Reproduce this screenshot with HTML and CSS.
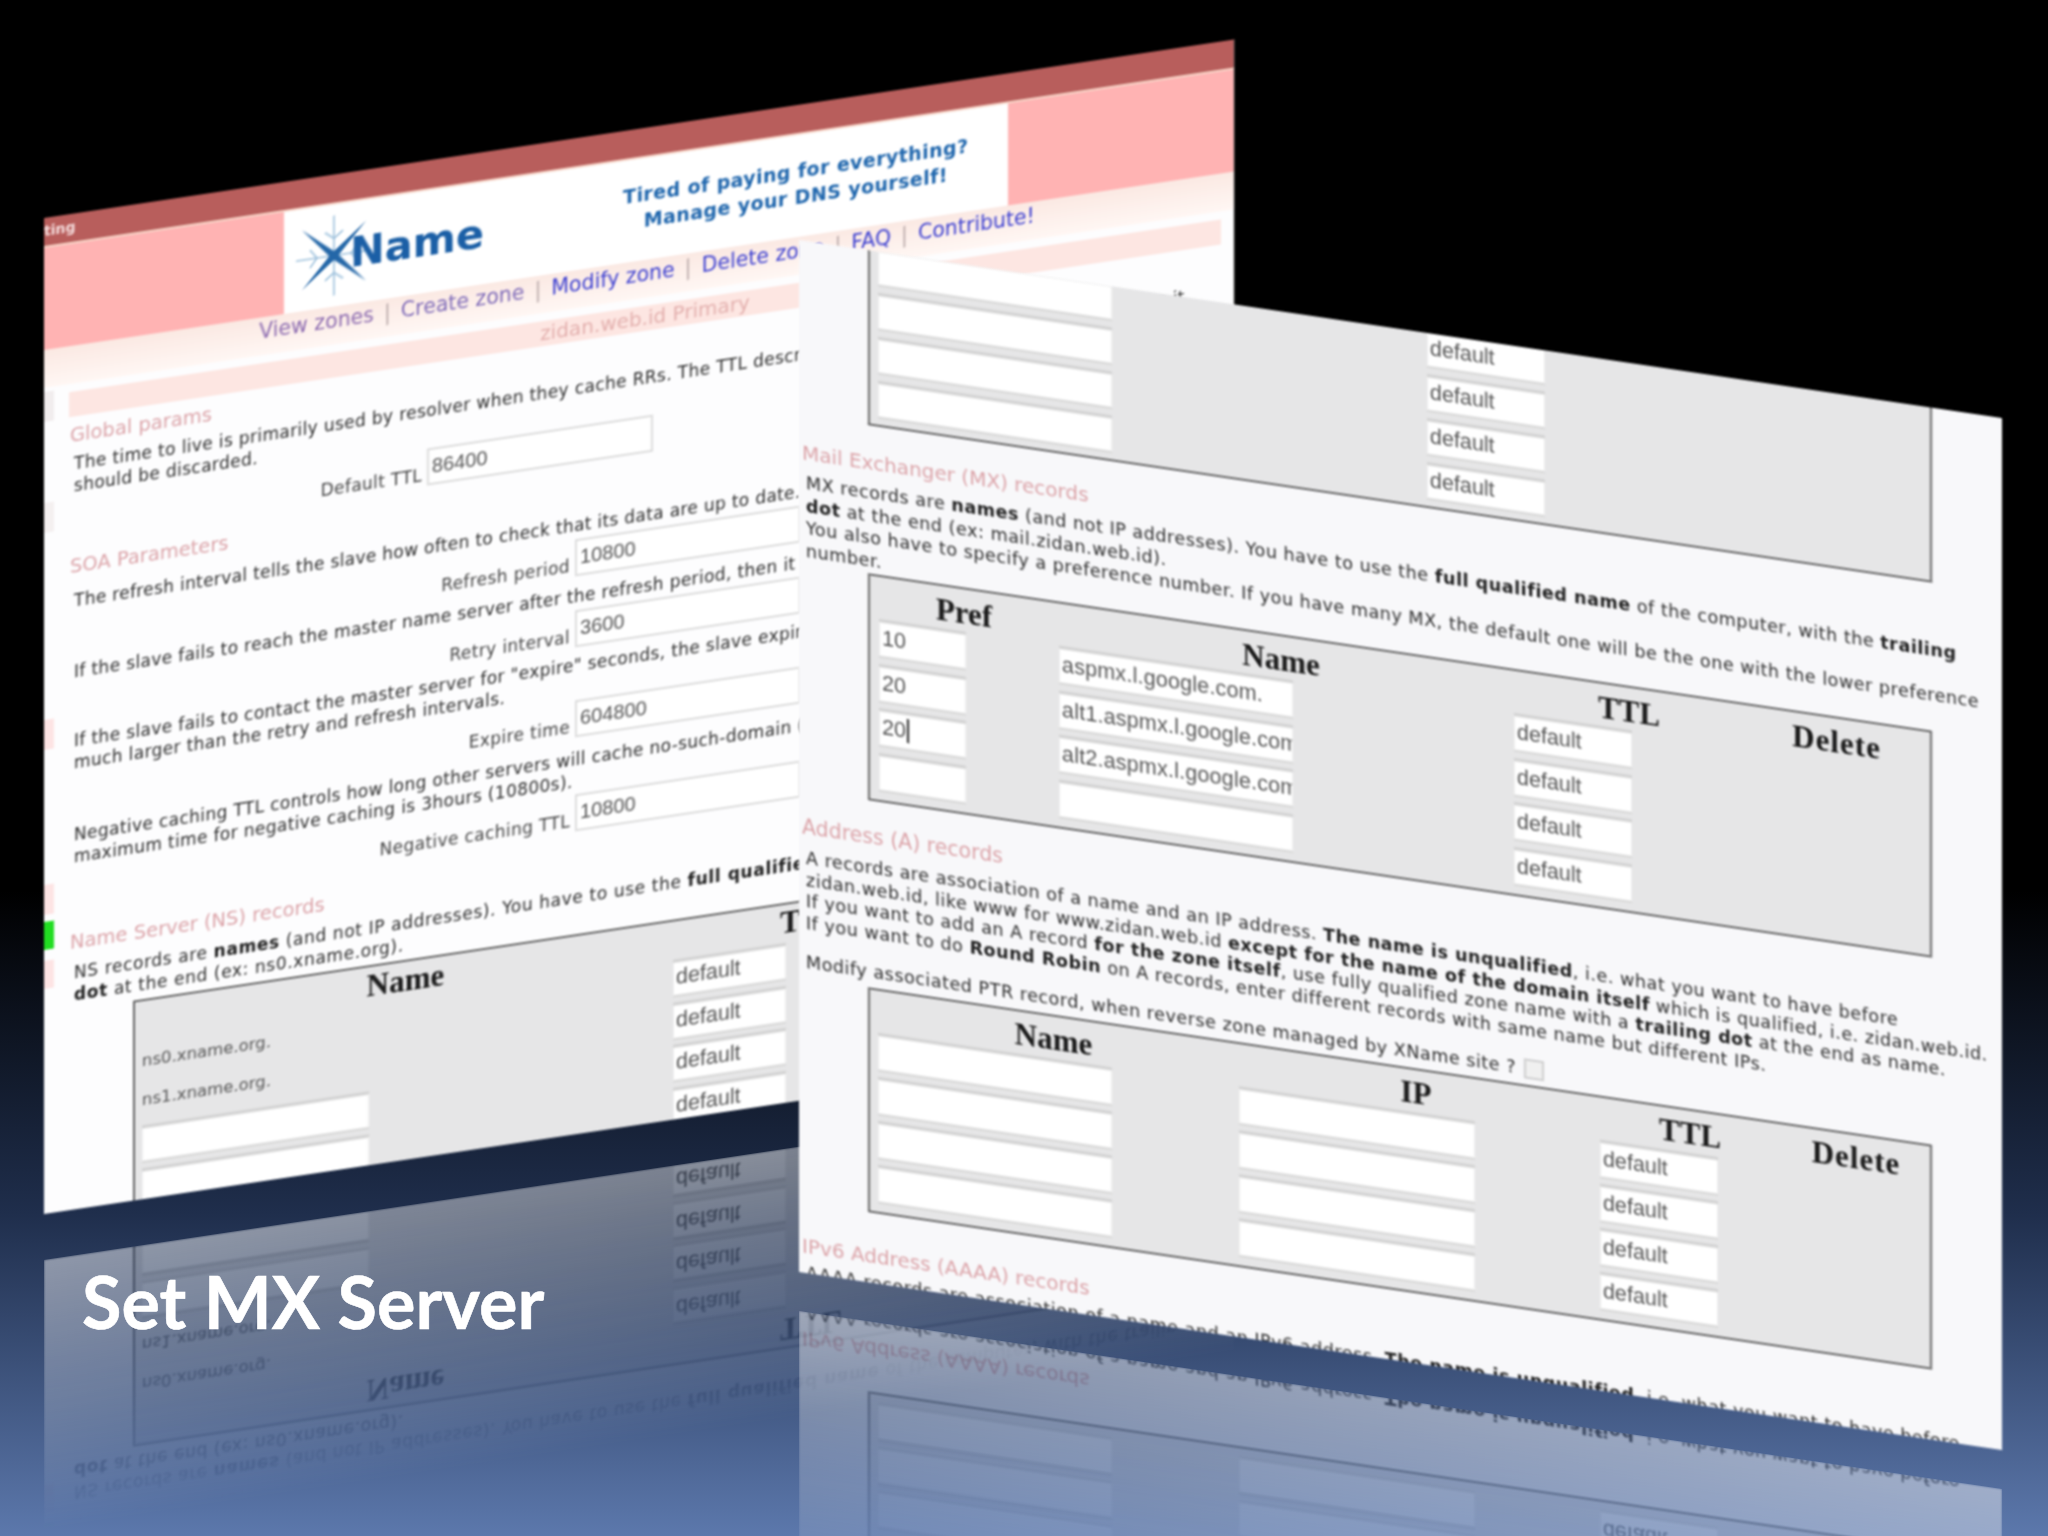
FILE: index.html
```html
<!DOCTYPE html>
<html lang="en">
<head>
<meta charset="utf-8">
<title>Set MX Server</title>
<link rel="stylesheet" href="styles.css">
</head>
<body>
<main class="stage">
  <section class="win win-left">
    <div class="titlebar">ting</div>
    <header class="brand">
      <div class="brand-box">
        <div class="logo">
          <svg class="star" viewBox="-42 -42 84 84" width="84" height="84" aria-hidden="true">
            <g fill="none" stroke="#9cc0dc" stroke-width="1.6">
              <path d="M0 -40V40M-38 0H38"/>
              <path d="M-9 -24L0 -17L9 -24M-9 24L0 17L9 24M-24 -9L-17 0L-24 9M24 -9L17 0L24 9"/>
            </g>
            <g fill="#2467a8">
              <path d="M-32 -30L3 -2L-2 3Z"/>
              <path d="M32 30L-3 2L2 -3Z"/>
              <path d="M32 -30L2 3L-3 -2Z"/>
              <path d="M-32 30L-2 -3L3 2Z"/>
            </g>
          </svg>
          <span class="logo-name">Name</span>
        </div>
        <p class="tagline">Tired of paying for everything?<br>Manage your DNS yourself!</p>
      </div>
    </header>
    <nav class="nav">
      <a class="visited">View zones</a><i>|</i><a class="visited2">Create zone</a><i>|</i><a>Modify zone</a><i>|</i><a>Delete zone</a><i>|</i><a>FAQ</a><i>|</i><a>Contribute!</a>
    </nav>
    <div class="band">zidan.web.id Primary</div>
    <div class="content">
      <h3 class="h-global">Global params</h3>
      <p class="p-a">The time to live is primarily used by resolver when they cache RRs. The TTL describes how long a RR can be cached before it<br>should be discarded.</p>
      <div class="row row-ttl"><label>Default TTL</label><div class="box">86400</div></div>
      <h3 class="h-soa">SOA Parameters</h3>
      <p class="p-b">The refresh interval tells the slave how often to check that its data are up to date.</p>
      <div class="row row-b"><label>Refresh period</label><div class="box">10800</div></div>
      <p class="p-c">If the slave fails to reach the master name server after the refresh period, then it starts trying every retry interval.</p>
      <div class="row row-c"><label>Retry interval</label><div class="box">3600</div></div>
      <p class="p-c2">If the slave fails to contact the master server for "expire" seconds, the slave expires its data. It must be<br>much larger than the retry and refresh intervals.</p>
      <div class="row row-d"><label>Expire time</label><div class="box">604800</div></div>
      <p class="p-e">Negative caching TTL controls how long other servers will cache no-such-domain (NXDOMAIN) responses. The<br>maximum time for negative caching is 3hours (10800s).</p>
      <div class="row row-d"><label>Negative caching TTL</label><div class="box">10800</div></div>
      <h3 class="h-ns">Name Server (NS) records</h3>
      <p class="p-f">NS records are <b>names</b> (and not IP addresses). You have to use the <b>full qualified name</b> of the computer, with the trailing<br><b>dot</b> at the end (ex: ns0.xname.org).</p>
      <div class="table table-ns">
        <div class="col col-ns-name">
          <h4>Name</h4>
          <div class="plain">ns0.xname.org.</div>
          <div class="plain">ns1.xname.org.</div>
          <div class="field wide"></div>
          <div class="field wide"></div>
        </div>
        <div class="col col-ns-ttl">
          <h4>TTL</h4>
          <div class="field ttl">default</div>
          <div class="field ttl">default</div>
          <div class="field ttl">default</div>
          <div class="field ttl">default</div>
        </div>
      </div>
    </div>
    <span class="mark m1"></span><span class="mark m2"></span><span class="mark m3"></span><span class="mark m4"></span><span class="mark m5"></span><span class="mark mark-green"></span>
  </section>

  <section class="win win-right">
    <div class="table table-top">
      <div class="col col-top-name">
        <div class="field wide"></div><div class="field wide"></div><div class="field wide"></div><div class="field wide"></div>
      </div>
      <div class="col col-top-ttl">
        <div class="field ttl">default</div><div class="field ttl">default</div><div class="field ttl">default</div><div class="field ttl">default</div>
      </div>
    </div>
    <h3 class="h-mx">Mail Exchanger (MX) records</h3>
    <p class="p-mx">MX records are <b>names</b> (and not IP addresses). You have to use the <b>full qualified name</b> of the computer, with the <b>trailing</b><br><b>dot</b> at the end (ex: mail.zidan.web.id).<br>You also have to specify a preference number. If you have many MX, the default one will be the one with the lower preference<br>number.</p>
    <div class="table table-mx">
      <div class="col col-pref">
        <h4>Pref</h4>
        <div class="field pref">10</div><div class="field pref">20</div><div class="field pref"><span class="caret">20</span></div><div class="field pref"></div>
      </div>
      <div class="col col-mxname">
        <h4>Name</h4>
        <div class="field wide">aspmx.l.google.com.</div><div class="field wide">alt1.aspmx.l.google.com</div><div class="field wide">alt2.aspmx.l.google.com</div><div class="field wide"></div>
      </div>
      <div class="col col-mxttl">
        <h4>TTL</h4>
        <div class="field ttl">default</div><div class="field ttl">default</div><div class="field ttl">default</div><div class="field ttl">default</div>
      </div>
      <div class="col col-del"><h4>Delete</h4></div>
    </div>
    <h3 class="h-a">Address (A) records</h3>
    <p class="p-addr">A records are association of a name and an IP address. <b>The name is unqualified</b>, i.e. what you want to have before<br>zidan.web.id, like www for www.zidan.web.id <b>except for the name of the domain itself</b> which is qualified, i.e. zidan.web.id.<br>If you want to add an A record <b>for the zone itself</b>, use fully qualified zone name with a <b>trailing dot</b> at the end as name.<br>If you want to do <b>Round Robin</b> on A records, enter different records with same name but different IPs.</p>
    <p class="p-ptr">Modify associated PTR record, when reverse zone managed by XName site ? <span class="check"></span></p>
    <div class="table table-a">
      <div class="col col-aname">
        <h4>Name</h4>
        <div class="field wide"></div><div class="field wide"></div><div class="field wide"></div><div class="field wide"></div>
      </div>
      <div class="col col-aip">
        <h4>IP</h4>
        <div class="field wide"></div><div class="field wide"></div><div class="field wide"></div><div class="field wide"></div>
      </div>
      <div class="col col-attl">
        <h4>TTL</h4>
        <div class="field ttl">default</div><div class="field ttl">default</div><div class="field ttl">default</div><div class="field ttl">default</div>
      </div>
      <div class="col col-adel"><h4>Delete</h4></div>
    </div>
    <h3 class="h-v6">IPv6 Address (AAAA) records</h3>
    <p class="p-v6">AAAA records are association of a name and an IPv6 address. <b>The name is unqualified</b>, i.e. what you want to have before</p>
  </section>

  <h1 class="slide-title">Set MX Server</h1>
</main>
</body>
</html>
```

FILE: styles.css
```css
* { box-sizing: border-box; }
html, body { margin: 0; padding: 0; background: #000; }
.stage {
  position: relative;
  width: 2048px;
  height: 1536px;
  overflow: hidden;
  background: linear-gradient(180deg, #000 0%, #000 58%, #1f2e4c 79%, #5c78ac 100%);
  font-family: "DejaVu Sans", sans-serif;
  color: #2c2c2c;
}

/* windows on the free canvas */
.win {
  position: absolute;
  top: 0;
  left: 0;
  overflow: hidden;
  transform-origin: 0 0;
  line-height: 22px;
  white-space: nowrap;
  filter: blur(0.8px);
}
.win-left {
  width: 1190px;
  height: 996px;
  background: #fdfdfe;
  font-size: 17px;
  letter-spacing: 0.36px;
  transform: matrix(1, -0.15, 0, 1, 44, 218);
  -webkit-box-reflect: below 46px linear-gradient(transparent 73%, rgba(255,255,255,0.48) 100%);
}
.win-right {
  width: 1203px;
  height: 1032px;
  background: #f8f8fa;
  font-size: 17.5px;
  letter-spacing: 0.55px;
  transform: matrix(1, 0.148, 0, 1, 799, 240);
  -webkit-box-reflect: below 39px linear-gradient(transparent 70%, rgba(255,255,255,0.46) 100%);
}

p, h3, h4 { margin: 0; font-weight: normal; }
b { color: #1e1e1e; }

/* left window chrome */
.titlebar {
  height: 30px;
  background: #b85e5c;
  color: #f5dcdc;
  font-size: 14px;
  font-weight: bold;
  letter-spacing: 0;
  line-height: 26px;
  border-bottom: 2px solid #f7d6c8;
}
.brand {
  height: 102px;
  background: #ffb3b3;
  padding-left: 240px;
  padding-right: 226px;
}
.brand-box {
  height: 100%;
  background: #fff;
  position: relative;
  display: flex;
  letter-spacing: 0;
}
.logo {
  display: flex;
  align-items: center;
  margin-left: 8px;
}
.star { margin-right: -26px; }
.logo-name {
  position: relative;
  font-weight: bold;
  font-size: 41.5px;
  color: #1b5fa6;
}
.tagline {
  margin: 23px 0 0 139px;
  font-size: 19px;
  line-height: 26px;
  font-weight: bold;
  text-align: center;
  color: #1f66ad;
  letter-spacing: 0.4px;
}
.nav {
  height: 38px;
  background: linear-gradient(180deg, #fbe9e3 0%, #fff7f4 100%);
  display: flex;
  justify-content: center;
  gap: 10px;
  font-size: 20.5px;
  letter-spacing: 0;
  line-height: 28px;
  color: #3c3fd0;
  padding-left: 16px;
}
.nav i { color: #b9a9a9; font-style: normal; }
.nav .visited { color: #8c6bb0; }
.nav .visited2 { color: #7f6bb8; }
.band {
  margin: 8px 13px 0 25px;
  height: 25px;
  background: #fde6e2;
  color: #e3b0ae;
  font-size: 20px;
  letter-spacing: 0;
  line-height: 25px;
  text-align: center;
}
.content { padding-left: 30px; }

h3 {
  line-height: 24px;
  font-size: 19.5px;
  letter-spacing: 0;
  color: #dba3a8;
  margin-left: -4px;
}
.h-global { margin-top: 7px; }
.p-a { margin-top: 5px; }
.row {
  display: flex;
  justify-content: flex-end;
  align-items: flex-end;
  gap: 5px;
  color: #444;
}
.row-ttl { width: 579px; margin-top: 5px; }
.row-b, .row-c, .row-d { width: 727px; }
.row-b { margin-top: 3px; }
.row-c { margin-top: 3px; }
.row-d { margin-top: 2px; }
.box {
  width: 226px;
  height: 37px;
  background: #fff;
  border: 2px solid #dcdcdc;
  font-family: "Liberation Sans", sans-serif;
  font-size: 20px;
  letter-spacing: 0;
  line-height: 33px;
  padding-left: 3px;
  color: #555;
}
.h-soa { margin-top: 16px; }
.p-b { margin-top: 11px; letter-spacing: 0.32px; }
.p-c { margin-top: 9px; }
.p-c2 { margin-top: 7px; }
.p-e { margin-top: 11px; }
.h-ns { margin-top: 24px; }
.p-f { margin-top: 7px; letter-spacing: 0.62px; }

/* form tables */
.table {
  display: flex;
  background: #e6e6e7;
  border: 2px solid #666;
  overflow: hidden;
}
.col { display: flex; flex-direction: column; flex: none; }
h4 {
  font-family: "Liberation Serif", serif;
  font-weight: bold;
  font-size: 31px;
  letter-spacing: 0;
  line-height: 36px;
  color: #1a1a1a;
  text-align: center;
}
.field {
  flex: none;
  height: 34px;
  margin-bottom: 10px;
  background: #fff;
  border: 1px solid #efefef;
  box-shadow: 0 -3px 0 #d3d3d3, 0 2px 0 #d9d9d9;
  font-family: "Liberation Sans", sans-serif;
  font-size: 21.5px;
  letter-spacing: 0;
  line-height: 28px;
  padding-left: 2px;
  color: #555;
  overflow: hidden;
}
.wide { width: 234px; letter-spacing: 0.2px; }
.ttl { width: 118px; }
.pref { width: 87px; }
.caret { border-right: 2px solid #222; padding-right: 1px; }
.plain {
  font-size: 16.5px;
  line-height: 22px;
  height: 39px;
  color: #555;
  letter-spacing: 0;
}

.table-ns { margin: 4px 0 0 59px; width: 1040px; height: 260px; }
.table-ns .field { margin-bottom: 9.7px; height: 33px; }
.table-ns h4 { height: 49px; padding-top: 1px; }
.table-ns .col-ns-ttl h4 { height: 41px; padding-top: 0; }
.table-ns .ttl { width: 113px; }
.table-ns .wide { width: 227px; }
.col-ns-name { width: 527px; margin-left: 7px; }
.col-ns-ttl { width: 276px; margin-left: 4px; }

.win-right > .table { margin-left: 69px; width: 1064px; }
.win-right > h3 { margin-left: 3px; font-size: 20px; }
.win-right > p { margin-left: 7px; }

.table-top { height: 175px; border-top: 0; padding-top: 0; }
.col-top-name { width: 539px; margin-left: 8px; }
.col-top-ttl { width: 200px; margin-left: 10px; }
.table-top .field { height: 33px; margin-bottom: 11px; }

.h-mx { margin-top: 25px; }
.p-mx { margin-top: 7px; line-height: 22.5px; }
.table-mx { margin-top: 2px; height: 227px; }
.table-mx h4 { height: 51px; padding-top: 6px; }
.table-mx .field { margin-bottom: 10.5px; line-height: 31px; }
.col-pref { width: 170px; margin-left: 9px; }
.col-mxname { width: 444px; margin-left: 10px; }
.col-mxttl { width: 230px; margin-left: 11px; }
.col-del { width: 165px; margin-left: 10px; }
.col-del h4, .col-adel h4 { letter-spacing: 1px; }

.win-right > .h-a { margin-top: 24px; font-size: 20.5px; }
.p-addr { margin-top: 9px; line-height: 21.5px; }
.p-ptr { margin-top: 17px; }
.check {
  display: inline-block;
  width: 20px;
  height: 20px;
  margin-left: 2px;
  vertical-align: -4px;
  background: #f0f0f0;
  border: 2px solid #cfcfcf;
}
.table-a { margin-top: 5px; height: 225px; }
.table-a h4 { height: 50px; padding-top: 5px; }
.table-a .field { line-height: 31px; }
.col-aname { width: 351px; margin-left: 8px; }
.col-aip { width: 354px; margin-left: 10px; }
.col-attl { width: 180px; margin-left: 7px; }
.col-adel { width: 144px; margin-left: 4px; }
.col-aip .wide { width: 236px; }
.h-v6 { margin-top: 31px; }
.p-v6 { margin-top: 4px; }

/* small marks along the left edge of the first window */
.mark { position: absolute; left: 0; width: 10px; background: #fde4e4; }
.m1 { top: 174px; height: 30px; background: #f1edee; }
.m2 { top: 285px; height: 30px; background: #f4f0f0; }
.m3 { top: 502px; height: 30px; }
.m4 { top: 667px; height: 30px; }
.m5 { top: 743px; height: 28px; }
.mark-green { top: 704px; height: 28px; background: #22dd22; }

.slide-title {
  position: absolute;
  left: 82px;
  top: 1258px;
  margin: 0;
  font-family: Lato, sans-serif;
  font-weight: 700;
  font-size: 72px;
  line-height: 86px;
  color: #fff;
  -webkit-text-stroke: 0.6px #fff;
}
```
